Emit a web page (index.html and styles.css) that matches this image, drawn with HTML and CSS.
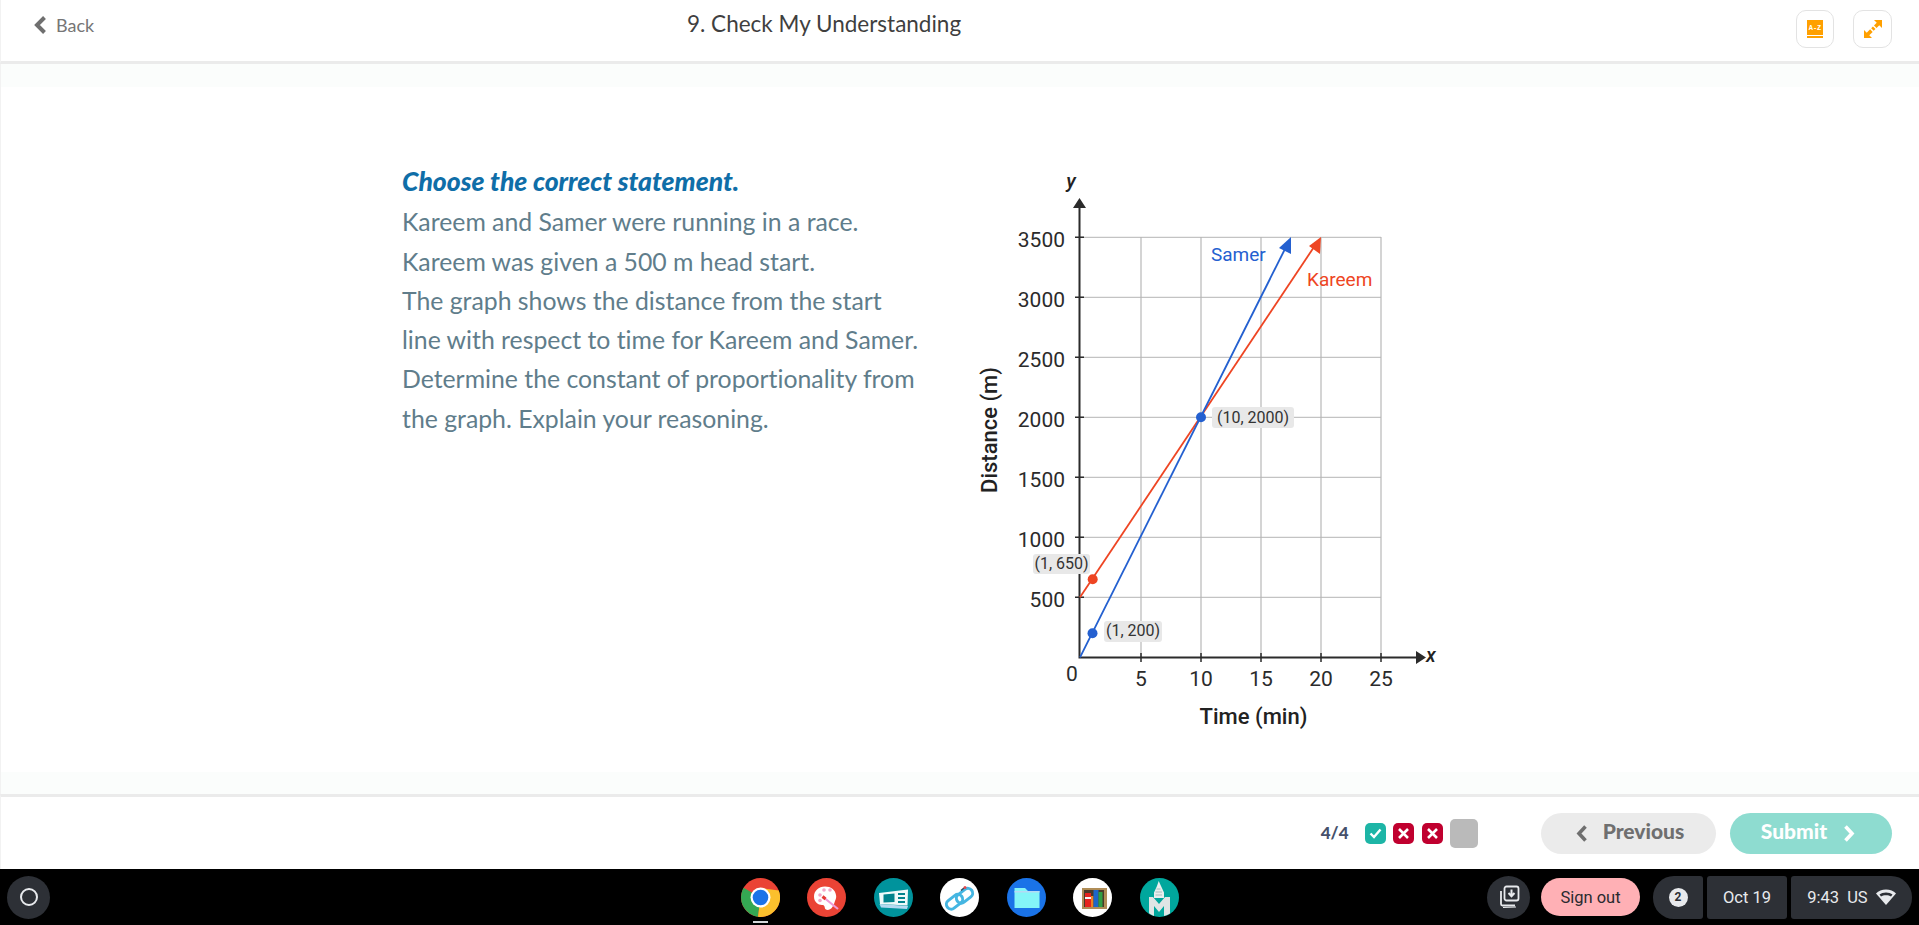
FILE: index.html
```html
<!DOCTYPE html>
<html lang="en">
<head>
  <meta charset="UTF-8" />
  <title>9. Check My Understanding</title>
  <link rel="stylesheet" href="styles.css">
</head>
<body>
  <header class="topbar">
    <a class="back">
      <svg class="back-icon" width="13" height="18" viewBox="0 0 13 18"><path d="M10.500 1.500 3 9l7.500 7.500" fill="none" stroke="#6f6f6f" stroke-width="4"/></svg>
      Back
    </a>
    <div class="lesson-title">9. Check My Understanding</div>
    <div class="tools">
      <button class="tool-btn">
        <svg width="16" height="18" viewBox="0 0 16 18"><rect width="16" height="15" fill="#ffa000"/><rect y="16" width="16" height="2" fill="#ffa000"/><text x="8" y="10" class="book-text">A-Z</text></svg>
      </button>
      <button class="tool-btn tool-btn-wide">
        <svg width="18" height="18" viewBox="0 0 18 18" fill="#ffa000"><path d="M10 0h8v8zM0 10v8h8z"/><path d="M3.500 14.500 14.500 3.500" stroke="#ffa000" stroke-width="3.600" stroke-dasharray="5.500 1.500 2.500 1.500 5"/></svg>
      </button>
    </div>
  </header>

  <main class="stage">
    <section class="panel">
      <div class="question">
        <h2 class="prompt">Choose the correct statement.</h2>
        <p>Kareem and Samer were running in a race.</p>
        <p>Kareem was given a 500 m head start.</p>
        <p>The graph shows the distance from the start</p>
        <p>line with respect to time for Kareem and Samer.</p>
        <p>Determine the constant of proportionality from</p>
        <p>the graph. Explain your reasoning.</p>
      </div>

      <svg class="chart" width="480" height="580" viewBox="970 170 480 580">
        <g class="grid-v">
          <path d="M1141 237V657M1201 237V657M1261 237V657M1321 237V657M1381 237V657"/>
        </g>
        <g class="grid-h">
          <path d="M1080 237.300H1381M1080 297.300H1381M1080 357.300H1381M1080 417.300H1381M1080 477.300H1381M1080 537.300H1381M1080 597.300H1381"/>
        </g>

        <g class="ticks">
          <path d="M1075 237.300H1084M1075 297.300H1084M1075 357.300H1084M1075 417.300H1084M1075 477.300H1084M1075 537.300H1084M1075 597.300H1084"/>
          <path d="M1141 653V662M1201 653V662M1261 653V662M1321 653V662M1381 653V662"/>
        </g>
        <path class="axis" d="M1079.500 206V657.500H1418"/>
        <path class="axis-head" d="M1079.500 198l6.500 10h-13zM1426 657.500l-10 6.500v-13z"/>

        <rect class="tag" x="1212" y="407" width="82" height="21" rx="3"/>
        <rect class="tag" x="1033" y="554" width="57" height="20" rx="3"/>
        <rect class="tag" x="1104" y="621" width="58" height="21" rx="3"/>

        <path class="line-kareem" d="M1080 597.300 1316 244"/>
        <path class="head-kareem" d="M1321 237 1320 254 1309 246z"/>
        <path class="line-samer" d="M1080 657.300 1287 245"/>
        <path class="head-samer" d="M1291 237 1291 254 1279 248z"/>

        <circle class="dot-kareem" cx="1092.700" cy="579.300" r="5"/>
        <circle class="dot-samer" cx="1092.500" cy="633.300" r="5"/>
        <circle class="dot-samer" cx="1201" cy="417.300" r="5"/>

        <g class="tick-label end">
          <text x="1065" y="247">3500</text>
          <text x="1065" y="307">3000</text>
          <text x="1065" y="367">2500</text>
          <text x="1065" y="427">2000</text>
          <text x="1065" y="487">1500</text>
          <text x="1065" y="547">1000</text>
          <text x="1065" y="607">500</text>
        </g>
        <g class="tick-label mid">
          <text x="1072" y="681">0</text>
          <text x="1141" y="686">5</text>
          <text x="1201" y="686">10</text>
          <text x="1261" y="686">15</text>
          <text x="1321" y="686">20</text>
          <text x="1381" y="686">25</text>
        </g>

        <text class="tag-text" x="1253" y="423">(10, 2000)</text>
        <text class="tag-text" x="1061.500" y="569">(1, 650)</text>
        <text class="tag-text" x="1133" y="636">(1, 200)</text>

        <text class="name-samer" x="1211" y="261">Samer</text>
        <text class="name-kareem" x="1307" y="286">Kareem</text>

        <text class="axis-name" x="1253.500" y="724">Time (min)</text>
        <text class="axis-name" transform="translate(997 430) rotate(-90)">Distance (m)</text>
        <text class="axis-var" x="1071" y="188">y</text>
        <text class="axis-var" x="1431" y="662">x</text>
      </svg>
    </section>
  </main>

  <footer class="actions">
    <span class="progress-text">4/4</span>
    <div class="marks">
      <span class="mark mark-ok">
        <svg width="13" height="11" viewBox="0 0 13 11"><path d="M1.500 5.500 5 9l6.500-7.500" fill="none" stroke="#fff" stroke-width="2.400"/></svg>
      </span>
      <span class="mark mark-bad">
        <svg width="11" height="11" viewBox="0 0 11 11"><path d="M1 1l9 9M10 1l-9 9" stroke="#fff" stroke-width="2.600"/></svg>
      </span>
      <span class="mark mark-bad">
        <svg width="11" height="11" viewBox="0 0 11 11"><path d="M1 1l9 9M10 1l-9 9" stroke="#fff" stroke-width="2.600"/></svg>
      </span>
      <span class="mark mark-empty"></span>
    </div>
    <button class="nav-btn nav-prev">
      <svg width="12" height="17" viewBox="0 0 12 17"><path d="M9.500 1.500 3 8.500l6.500 7" fill="none" stroke="#6f6f6f" stroke-width="3.600"/></svg>
      <span class="nav-label">Previous</span>
    </button>
    <button class="nav-btn nav-submit">
      <span class="nav-label">Submit</span>
      <svg width="12" height="17" viewBox="0 0 12 17"><path d="M2.500 1.500 9 8.500l-6.500 7" fill="none" stroke="#fff" stroke-width="3.600"/></svg>
    </button>
  </footer>

  <nav class="shelf">
    <div class="shelf-left">
      <span class="launcher"><span class="launcher-ring"></span></span>
    </div>

    <div class="dock">
      <span class="app app-active">
        <svg width="39" height="39" viewBox="0 0 39 39">
          <circle cx="19.500" cy="19.500" r="19.500" fill="#ea4335"/>
          <path d="M2.600 9.750A19.500 19.500 0 0 0 17 38.800L19.500 19.500z" fill="#34a853"/>
          <path d="M37.800 12.500A19.500 19.500 0 0 1 17 38.800L19.500 19.500 19.500 10z" fill="#fbc02d"/>
          <circle cx="19.500" cy="19.500" r="10" fill="#fff"/>
          <circle cx="19.500" cy="19.500" r="7.800" fill="#1a73e8"/>
        </svg>
      </span>
      <span class="app">
        <svg width="39" height="39" viewBox="0 0 39 39">
          <circle cx="19.500" cy="19.500" r="19.500" fill="#ea4335"/>
          <path d="M18 8.500C11.500 8.500 7 13 7 18.500 7 24 11 27 15 27c2.500 0 2.500 1.500 3 3.500.5 1.500 3 1.800 5 .8 2-1 4-4.300 5-8.300 1-2 1.500-4 1-6C28 11.500 24 8.500 18 8.500z" fill="#fff"/>
          <circle cx="13" cy="17" r="1.800" fill="#f4a6c8"/>
          <circle cx="17" cy="12" r="1.800" fill="#f4a6c8"/>
          <circle cx="23" cy="12" r="1.800" fill="#f4a6c8"/>
          <circle cx="13" cy="22.500" r="1.800" fill="#f4a6c8"/>
          <path d="M18 20.500 31 31" stroke="#f09ad6" stroke-width="2.200"/>
          <path d="M15.500 18.500 18.500 21" stroke="#e53935" stroke-width="3"/>
        </svg>
      </span>
      <span class="app">
        <svg width="39" height="39" viewBox="0 0 39 39">
          <circle cx="19.500" cy="19.500" r="19.500" fill="#00939c"/>
          <path d="M5.500 26 34 28l-1 3-26-1.500z" fill="#b3d9f0"/>
          <path d="M5 15 34 11.500 33.500 27.500 6 26z" fill="#eef9f9"/>
          <path d="M9.500 16.500 20.500 15.500V24L9.500 24.500z" fill="#00838c"/>
          <path d="M24 16h7M24 20h7M24 24h7" stroke="#00838c" stroke-width="2"/>
        </svg>
      </span>
      <span class="app">
        <svg width="39" height="39" viewBox="0 0 39 39">
          <circle cx="19.500" cy="19.500" r="19.500" fill="#fff"/>
          <rect x="5.500" y="19" width="18" height="9.500" rx="4.700" transform="rotate(-38 14.500 23.700)" fill="none" stroke="#45b6e2" stroke-width="3"/>
          <rect x="15.500" y="13" width="18" height="9.500" rx="4.700" transform="rotate(-38 24.500 17.700)" fill="none" stroke="#45b6e2" stroke-width="3"/>
          <path d="M21 12.500l3-2.500" stroke="#33475b" stroke-width="1.600"/>
          <circle cx="25" cy="9.500" r="1.500" fill="#e5484d"/>
        </svg>
      </span>
      <span class="app">
        <svg width="39" height="39" viewBox="0 0 39 39">
          <circle cx="19.500" cy="19.500" r="19.500" fill="#1a73e8"/>
          <path d="M7.500 10h10.500l3 3h11.500v17H7.500z" fill="#84f5f8"/>
          <path d="M7.500 13h25v1.500H7.500z" fill="#b5d9f5"/>
        </svg>
      </span>
      <span class="app">
        <svg width="39" height="39" viewBox="0 0 39 39">
          <circle cx="19.500" cy="19.500" r="19.500" fill="#fff"/>
          <rect x="9" y="10" width="25" height="21" fill="#b08d57"/>
          <rect x="11" y="12" width="20" height="17" fill="#4a3a28"/>
          <rect x="12" y="15" width="6" height="14" fill="#e6231e"/>
          <rect x="12" y="19" width="6" height="2" fill="#f6f6f6"/>
          <rect x="18" y="18" width="2.500" height="11" fill="#f08020"/>
          <rect x="20.500" y="12" width="5" height="17" fill="#1e66c8"/>
          <rect x="25.500" y="14" width="4" height="15" fill="#2f9e44"/>
        </svg>
      </span>
      <span class="app">
        <svg width="39" height="39" viewBox="0 0 39 39">
          <circle cx="19.500" cy="19.500" r="19.500" fill="#00a79d"/>
          <path d="M18.700 3l2.300 5 3 6.500V20H14v-5.500l3-6.500z" fill="#e8eeee"/>
          <path d="M16.500 11h4M15.500 14h6.500M15.500 17h6.500" stroke="#a8bcbc" stroke-width="1"/>
          <path d="M9 19h4l6 7 6-7h5v16.500a19.500 19.500 0 0 1-6 2.500v-10l-5 6-5-6v10a19.500 19.500 0 0 1-5-2.800z" fill="#dfe5e5"/>
        </svg>
      </span>
    </div>

    <div class="tray">
      <span class="round-btn">
        <svg width="22" height="24" viewBox="0 0 22 24"><rect x="6.500" y="1.500" width="14" height="14" rx="2" fill="none" stroke="#e8eaed" stroke-width="1.800"/><path d="M13.500 4.500v6M10.500 8l3 3.200 3-3.200" fill="none" stroke="#e8eaed" stroke-width="2"/><path d="M3 6v13c0 1 .5 1.500 1.500 1.500H17" fill="none" stroke="#e8eaed" stroke-width="1.800"/><path d="M5 22.500l13-.5" stroke="#e8eaed" stroke-width="1"/></svg>
      </span>
      <button class="sign-out">Sign out</button>
      <div class="status">
        <span class="status-cell status-first"><span class="count">2</span></span>
        <span class="status-cell status-date">Oct 19</span>
        <span class="status-cell status-last">
          <span>9:43</span><span>US</span>
          <svg width="20" height="16" viewBox="0 0 20 16"><path d="M10 16 0 4.500C2.500 2 6 .5 10 .5s7.500 1.500 10 4z" fill="#e8eaed"/><path d="M3.500 5.500C5 4.300 7.500 3.500 10 3.500s5 .8 6.500 2L15 7.500c-1.300-.8-3-1.200-5-1.200s-3.700.4-5 1.200z" fill="#2d3036"/></svg>
        </span>
      </div>
    </div>
  </nav>
</body>
</html>
```

FILE: styles.css
```css
* {
  box-sizing: border-box;
}
html, body {
  height: 100%;
}
body {
  margin: 0;
  display: flex;
  flex-direction: column;
  height: 925px;
  overflow: hidden;
  background: #fff;
  font-family: Lato, sans-serif;
  font-variant-ligatures: none;
}
button {
  font-family: inherit;
  border: none;
  padding: 0;
}

/* top bar */
.topbar {
  height: 64px;
  flex: none;
  display: grid;
  grid-template-columns: 653px auto 1fr;
  align-items: center;
  padding: 0 27px 0 33px;
  background: #fff;
  border-bottom: 3px solid #ebebeb;
  border-left: 1px solid #f2f2f2;
}
.back {
  display: flex;
  align-items: center;
  gap: 9px;
  font-size: 18px;
  color: #767676;
  margin-bottom: 11px;
}
.lesson-title {
  font-size: 22.500px;
  color: #3f3f3f;
  margin-bottom: 14px;
}
.tools {
  display: flex;
  justify-content: flex-end;
  gap: 19px;
  margin-bottom: 3px;
}
.tool-btn {
  width: 38px;
  height: 38px;
  display: flex;
  align-items: center;
  justify-content: center;
  background: #fff;
  border: 1px solid #e3e3e3;
  border-radius: 10px;
}
.tool-btn-wide {
  width: 39px;
}
.book-text {
  font-family: "Liberation Mono", monospace;
  font-size: 7px;
  font-weight: bold;
  fill: #fff;
  text-anchor: middle;
}

/* question area */
.stage {
  flex: 1;
  min-height: 0;
  padding: 23px 0 22px;
  background: #fbfdfc;
  border-left: 1px solid #f2f2f2;
}
.panel {
  height: 100%;
  display: flex;
  align-items: flex-start;
  padding: 83px 0 0 401px;
  background: #fff;
}
.question {
  width: 568px;
  flex: none;
  font-size: 24.800px;
  line-height: 39.300px;
  color: #607d8b;
}
.question p {
  margin: 0;
  white-space: nowrap;
  position: relative;
  top: -7px;
}
.prompt {
  margin: 0;
  font-size: 26.500px;
  font-style: italic;
  font-weight: 900;
  color: #0f6ea8;
  position: relative;
  top: -8px;
}

/* graph */
.chart {
  flex: none;
  font-family: Roboto, sans-serif;
}
.grid-v path {
  fill: none;
  stroke: #d4d4d4;
  stroke-width: 2;
}
.grid-h path {
  fill: none;
  stroke: #b4b4b4;
  stroke-width: 1;
}
.ticks path, .axis {
  fill: none;
  stroke: #2b2b2b;
  stroke-width: 2;
}
.ticks path {
  stroke-width: 1.500;
}
.axis-head {
  fill: #2b2b2b;
}
.tag {
  fill: #e8e8e8;
}
.line-kareem {
  fill: none;
  stroke: #ee4523;
  stroke-width: 1.800;
}
.head-kareem, .dot-kareem {
  fill: #ee4523;
}
.line-samer {
  fill: none;
  stroke: #2460d0;
  stroke-width: 1.800;
}
.head-samer, .dot-samer {
  fill: #2460d0;
}
.tick-label text {
  font-size: 21px;
  fill: #2b2b2b;
}
.tick-label.end text {
  text-anchor: end;
}
.tick-label.mid text {
  text-anchor: middle;
}
.tag-text {
  font-size: 16px;
  fill: #333;
  text-anchor: middle;
}
.name-samer {
  font-size: 19px;
  fill: #2460d0;
}
.name-kareem {
  font-size: 19px;
  fill: #ee4523;
}
.axis-name {
  font-size: 22px;
  font-weight: 500;
  fill: #222;
  text-anchor: middle;
}
.axis-var {
  font-size: 20px;
  font-style: italic;
  font-weight: 500;
  fill: #222;
  text-anchor: middle;
}

/* footer */
.actions {
  height: 75px;
  flex: none;
  display: flex;
  align-items: center;
  justify-content: flex-end;
  padding: 0 27px 0 0;
  background: #fff;
  border-top: 3px solid #ebebeb;
  border-left: 1px solid #f2f2f2;
}
.progress-text {
  font-size: 17px;
  font-weight: 900;
  color: #45506a;
  margin: 0 16px 2px 0;
}
.marks {
  display: flex;
  align-items: center;
  gap: 7.500px;
  margin-right: 63px;
}
.mark {
  width: 21px;
  height: 21px;
  display: flex;
  align-items: center;
  justify-content: center;
  border-radius: 5px;
}
.mark-ok {
  background: #1db5a6;
}
.mark-bad {
  background: #c0002f;
}
.mark-empty {
  width: 28px;
  height: 29px;
  background: #bababa;
}
.nav-btn {
  height: 41px;
  display: flex;
  align-items: center;
  justify-content: center;
  border-radius: 21px;
  font-size: 21px;
  font-weight: 900;
}
.nav-label {
  margin-bottom: 5px;
}
.nav-prev {
  width: 175px;
  gap: 15px;
  padding-left: 3px;
  margin-right: 14px;
  background: #ebebeb;
  color: #6f6f6f;
}
.nav-submit {
  width: 162px;
  gap: 16px;
  padding-right: 6px;
  background: #8edcd0;
  color: #fff;
}

/* chrome os shelf */
.shelf {
  height: 56px;
  flex: none;
  display: grid;
  grid-template-columns: 1fr auto 1fr;
  align-items: center;
  padding: 0 7px;
  background: #000;
  font-family: Roboto, sans-serif;
  color: #e8eaed;
}
.launcher {
  width: 43px;
  height: 43px;
  display: flex;
  align-items: center;
  justify-content: center;
  border-radius: 50%;
  background: #2d3036;
}
.launcher-ring {
  width: 18px;
  height: 18px;
  border: 2px solid #e8eaed;
  border-radius: 50%;
}
.dock {
  display: flex;
  gap: 27.500px;
}
.app {
  position: relative;
  width: 39px;
  height: 39px;
  display: block;
}
.app svg {
  display: block;
}
.app-active::after {
  content: "";
  position: absolute;
  left: 12px;
  top: 43px;
  width: 15px;
  height: 2px;
  background: #d5d7da;
}
.tray {
  display: flex;
  align-items: center;
  justify-content: flex-end;
}
.round-btn {
  width: 43px;
  height: 43px;
  display: flex;
  align-items: center;
  justify-content: center;
  margin-right: 11px;
  border-radius: 50%;
  background: #2d3036;
}
.sign-out {
  width: 99px;
  height: 38px;
  margin-right: 13px;
  border-radius: 19px;
  background: #ffb0b5;
  color: #2a2b30;
  font-size: 16.500px;
  font-family: Roboto, sans-serif;
}
.status {
  display: flex;
  gap: 4px;
}
.status-cell {
  height: 43px;
  display: flex;
  align-items: center;
  justify-content: center;
  background: #2d3036;
  border-radius: 3px;
  font-size: 16.500px;
}
.status-first {
  width: 50px;
  border-radius: 21px 3px 3px 21px;
}
.status-date {
  width: 80px;
}
.status-last {
  width: 121px;
  gap: 8px;
  border-radius: 3px 21px 21px 3px;
}
.count {
  width: 19px;
  height: 19px;
  display: flex;
  align-items: center;
  justify-content: center;
  border-radius: 50%;
  background: #e8eaed;
  color: #2d3036;
  font-size: 12px;
  font-weight: 700;
}
```
